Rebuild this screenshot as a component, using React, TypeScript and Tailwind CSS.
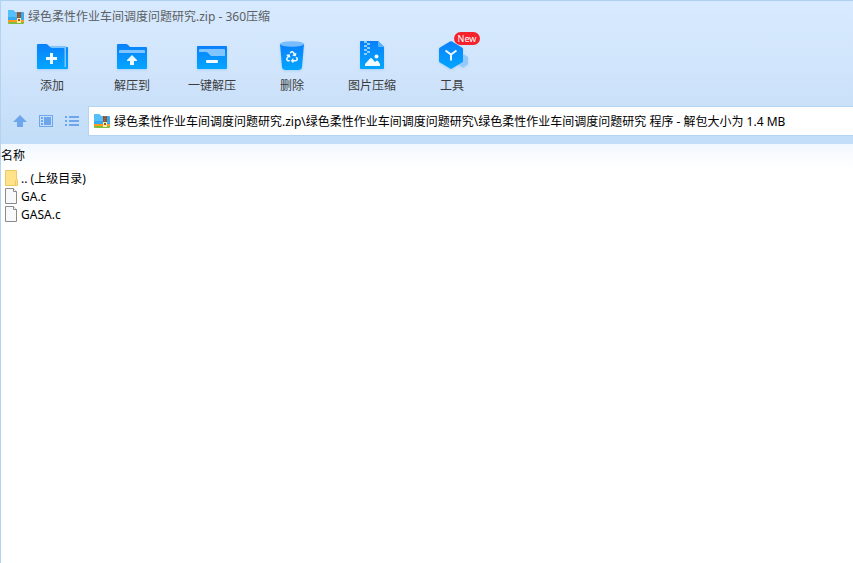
import { useId, useState } from 'react';
import type { ReactNode } from 'react';
import { FaRecycle } from 'react-icons/fa';

export default function App() {
  const [path, setPath] = useState(
    '绿色柔性作业车间调度问题研究.zip\\绿色柔性作业车间调度问题研究\\绿色柔性作业车间调度问题研究 程序 - 解包大小为 1.4 MB'
  );

  return (
    <div className="min-h-screen border-l border-[#b4d3f1] bg-white font-['Noto_Sans','Noto_Sans_CJK_SC',sans-serif] text-xs text-black">
      <header className="border-t border-[#b0d0f0] bg-linear-to-b from-[#d7eaff] via-[#d0e4fb] to-[#c2ddf8]">
        {/* Title bar */}
        <div className="flex h-[31px] items-center gap-1 pl-[7px] text-[#5c5f63]">
          <ArchiveIcon />
          <h1>绿色柔性作业车间调度问题研究.zip - 360压缩</h1>
        </div>

        {/* Toolbar */}
        <div className="flex pt-2 pl-[11px]">
          {tools.map((tool) => (
            <button
              key={tool.label}
              type="button"
              className="relative flex w-20 flex-col items-center gap-1 text-[#3c3c3c]"
            >
              <ToolIcon>{tool.icon}</ToolIcon>
              <span className="pt-0.5 leading-4">{tool.label}</span>
              {tool.isNew && (
                <span className="absolute -top-2 left-[42px] h-[13px] w-[26px] rounded-full bg-[#f5222d] text-center text-[9px] leading-[13px] text-white">
                  New
                </span>
              )}
            </button>
          ))}
        </div>

        {/* Navigation and address */}
        <div className="flex items-center gap-[9px] pt-3 pb-2 pl-3">
          <div className="flex gap-3 text-[#6ea6ee]">
            <button type="button" aria-label="向上">
              <svg viewBox="0 0 14 14" className="size-3.5" fill="currentColor">
                <path d="M7 1 14 8H10V13H4V8H0Z" />
              </svg>
            </button>
            <button type="button" aria-label="预览">
              <svg viewBox="0 0 14 14" className="size-3.5" fill="currentColor">
                <path fillRule="evenodd" d="M0 1H14V13H0ZM1 2V12H13V2Z" />
                <path d="M2 3H4V5H2ZM2 6H4V8H2ZM2 9H4V11H2ZM5 3H12V11H5Z" />
              </svg>
            </button>
            <button type="button" aria-label="列表">
              <svg viewBox="0 0 14 14" className="size-3.5" fill="currentColor">
                <path d="M0 2H2V4H0ZM0 6H2V8H0ZM0 10H2V12H0ZM4 2H14V4H4ZM4 6H14V8H4ZM4 10H14V12H4Z" />
              </svg>
            </button>
          </div>
          <label className="flex h-[30px] min-w-0 flex-1 items-center gap-1 border-y border-l border-[#b5d3f2] bg-white pl-[5px]">
            <ArchiveIcon />
            <input
              type="text"
              aria-label="路径"
              value={path}
              onChange={(e) => setPath(e.target.value)}
              className="min-w-0 flex-1 pt-0.5 outline-none"
            />
          </label>
        </div>
      </header>

      {/* File list */}
      <table className="w-full text-left">
        <thead>
          <tr className="h-[25px] bg-linear-to-b from-[#f2f8ff] to-white">
            <th className="p-0 pb-0.5 font-normal">名称</th>
          </tr>
        </thead>
        <tbody>
          {files.map((file) => (
            <tr key={file.name} className="h-[18px]">
              <td className="p-0">
                <div className="flex h-[18px] items-center gap-[3px] pl-1">
                  {file.folder ? <FolderIcon /> : <FileIcon />}
                  <span className="pt-0.5 leading-4">{file.name}</span>
                </div>
              </td>
            </tr>
          ))}
        </tbody>
      </table>
    </div>
  );
}

function ArchiveIcon() {
  return (
    <svg viewBox="0 0 16 16" className="size-4 shrink-0">
      <path d="M0 2Q0 1 1 1H5L7 3H15Q16 3 16 4V12H0Z" fill="#35a9f2" />
      <path d="M0 2Q0 1 1 1H5L7 3H9V8H0Z" fill="#55bffa" />
      <path d="M0 11H16V13H0Z" fill="#ff9a1c" />
      <path d="M0 13H16V14Q16 15 15 15H1Q0 15 0 14Z" fill="#80bd3c" />
      <path d="M9 3H13V10H9Z" fill="#8a5230" />
      <path d="M11 3V10" stroke="#b98350" strokeDasharray="1 1" />
      <path d="M9 9H13V14H9Z" fill="#ffe9a8" />
      <path d="M10 10H12V12H10Z" fill="#9a5722" />
    </svg>
  );
}

function FolderIcon() {
  return (
    <svg viewBox="0 0 13 16" className="h-4 w-[13px] shrink-0">
      <path d="M.5.5H11.5V9L12.5 10V15.5H.5Z" fill="#ffe28a" stroke="#edc963" />
      <path d="M10.5 15V10.5" stroke="#edc963" />
    </svg>
  );
}

function FileIcon() {
  return (
    <svg viewBox="0 0 13 16" className="h-4 w-[13px] shrink-0">
      <path d="M.5.5H8.5L11.5 3.5V15.5H.5Z" fill="#f9f9f9" stroke="#8a8a8a" />
      <path d="M8.5.5V3.5H11.5" fill="#fff" stroke="#8a8a8a" />
    </svg>
  );
}

// Shared frame: every toolbar glyph is filled with the same blue gradient
function ToolIcon({ children }: { children: (fill: string) => ReactNode }) {
  const id = useId();
  return (
    <svg viewBox="0 0 32 32" className="size-8 drop-shadow-[0_1px_1px_rgba(60,150,240,0.25)]">
      <defs>
        <linearGradient id={id} x1="0" y1="0" x2="0" y2="1">
          <stop offset="0" stopColor="#0a80fb" />
          <stop offset="1" stopColor="#02a6ff" />
        </linearGradient>
      </defs>
      {children(`url(#${id})`)}
    </svg>
  );
}

const tools: { label: string; isNew?: boolean; icon: (fill: string) => ReactNode }[] = [
  {
    label: '添加',
    icon: (fill) => (
      <>
        <path d="M1 5Q1 4 2 4H10Q11 4 12 5L14 7H31Q32 7 32 8V28Q32 29 31 29H2Q1 29 1 28Z" fill={fill} />
        <path d="M14 6H29Q30 6 30 7V27H28.5V9Q28.5 8 27.5 8H15Z" fill="#7fc4ff" />
        <path d="M14 13H17V17H21V20H17V24H14V20H10V17H14Z" fill="#eef8ff" />
      </>
    ),
  },
  {
    label: '解压到',
    icon: (fill) => (
      <>
        <path d="M1 5Q1 4 2 4H10Q11 4 12 5L14 7H30Q31 7 31 8V28Q31 29 30 29H2Q1 29 1 28Z" fill={fill} />
        <path d="M3 13V11Q3 10 4 10H28Q29 10 29 11V13Z" fill="#80c5ff" />
        <path d="M16 15 21 20V21H18V25H14V21H11V20Z" fill="#eef8ff" />
      </>
    ),
  },
  {
    label: '一键解压',
    icon: (fill) => (
      <>
        <path d="M1 7Q1 6 2 6H30Q31 6 31 7V28Q31 29 30 29H2Q1 29 1 28Z" fill={fill} />
        <path d="M3 12V10Q3 9 4 9H28Q29 9 29 10V16H15L12 13Q11 12 10 12Z" fill="#80c5ff" />
        <rect x="10" y="20" width="12" height="3" rx="1" fill="#f3faff" />
      </>
    ),
  },
  {
    label: '删除',
    icon: (fill) => (
      <>
        <path d="M4 4H28L26 27Q25.700 30 22 30H10Q6.300 30 6 27Z" fill={fill} />
        <ellipse cx="16" cy="4" rx="12" ry="2.800" fill="#78beff" />
        <FaRecycle x={10} y={11} size={12} color="#f3faff" />
      </>
    ),
  },
  {
    label: '图片压缩',
    icon: (fill) => (
      <>
        <path d="M4 2Q4 1 5 1H22L28 7V28Q28 29 27 29H5Q4 29 4 28Z" fill={fill} />
        <path d="M22 1V6Q22 7 23 7H28Z" fill="#55b3ff" />
        <path d="M8 1H11V3H8ZM11 3H14V5H11ZM8 5H11V7H8ZM11 7H14V9H11ZM8 9H11V11H8ZM8 13H11V15H8ZM11 11H14V13H11Z" fill="#8dccff" />
        <circle cx="20.500" cy="16.500" r="2" fill="#f3faff" />
        <path d="M9 26V24L14 18.500Q15 17.500 16 18.500L19 22L20.500 20.800Q21.300 20.200 22 21L24 24V26Z" fill="#f3faff" />
      </>
    ),
  },
  {
    label: '工具',
    isNew: true,
    icon: (fill) => (
      <>
        <path d="M28 14.500 32 17V24L27 27.500 22 24V18Z" fill="#94c9fc" />
        <path d="M14 1.500Q15 .800 16 1.500L26 7.500Q27 8 27 9V21Q27 22 26 22.500L16 28.500Q15 29.200 14 28.500L4 22.500Q3 22 3 21V9Q3 8 4 7.500Z" fill={fill} />
        <path d="M9.500 10.500 15 14.500 20.500 10.500M15 14.500V20.500" fill="none" stroke="#eef8ff" strokeWidth="2" />
      </>
    ),
  },
];

const files = [
  { name: '.. (上级目录)', folder: true },
  { name: 'GA.c', folder: false },
  { name: 'GASA.c', folder: false },
];
